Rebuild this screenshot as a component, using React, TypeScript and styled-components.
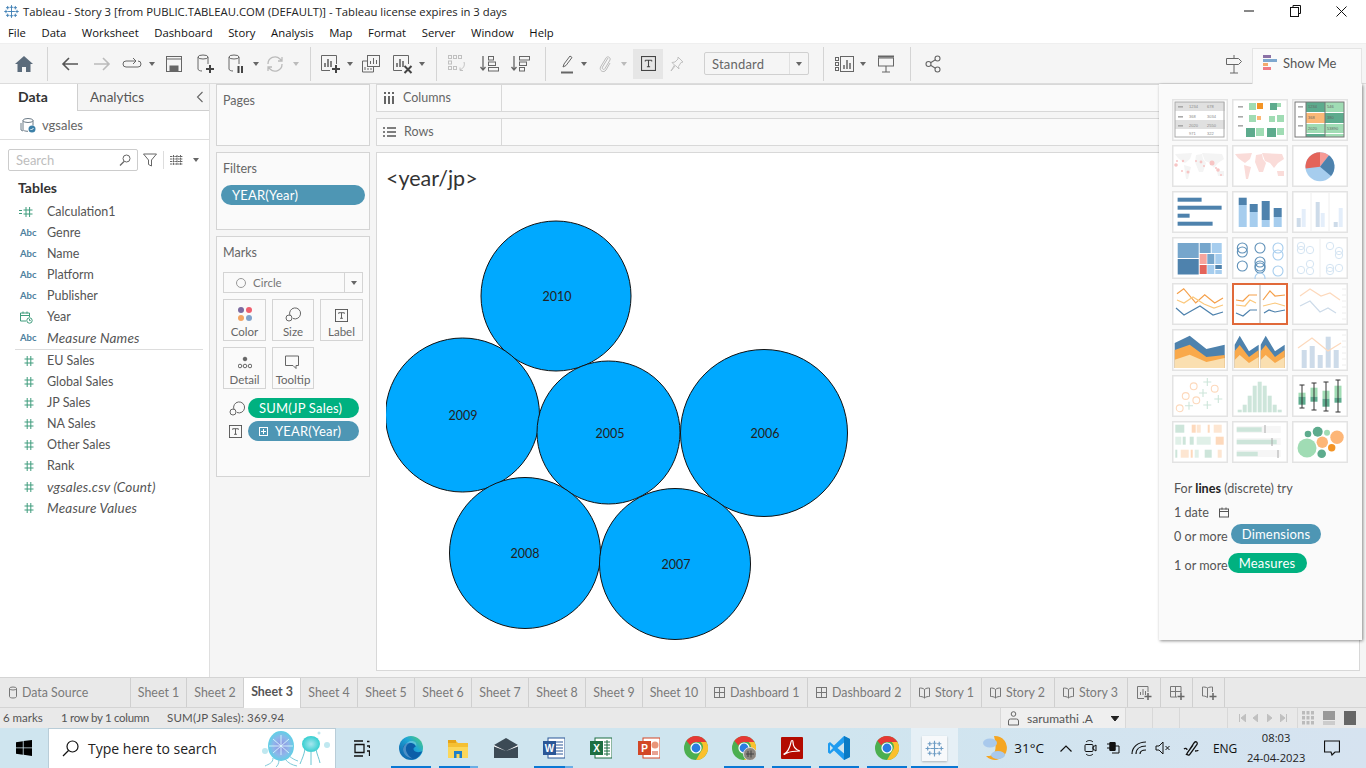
import React from 'react';
import styled, { createGlobalStyle } from 'styled-components';

const APP = '"Lato", "Open Sans", sans-serif';
const WIN = '"Open Sans", "Noto Sans", sans-serif';

const Global = createGlobalStyle`
  html, body { margin: 0; padding: 0; width: 1366px; height: 768px; overflow: hidden; background: #fff; }
  * { box-sizing: border-box; }
  svg { display: block; flex: none; }
`;

const Root = styled.div`
  width: 1366px; height: 768px; display: flex; flex-direction: column; font-family: ${APP}; color: #555; overflow: hidden;
`;
const TitleBar = styled.div`
  height: 22px; display: flex; align-items: center; padding-left: 3px; background: #fff;
`;
const TitleText = styled.span`
  font: 11.3px ${WIN}; color: #222; margin-left: 3px; white-space: nowrap;
`;
const WindowControls = styled.div`
  margin-left: auto; display: flex; align-items: center; height: 22px; padding-right: 2px;
`;
const WindowBtn = styled.div<{ $w: number }>`
  width: ${p => p.$w}px; display: flex; justify-content: center; align-items: center;
`;
const MenuBar = styled.div`
  height: 21px; display: flex; align-items: center; gap: 15.6px; padding-left: 8px; background: #fff;
`;
const MenuItem = styled.span`
  font: 11.3px ${WIN}; color: #111;
`;
const Toolbar = styled.div`
  height: 41px; display: flex; align-items: center; padding-left: 8px; background: #f5f5f5; border-bottom: 1px solid #dcdcdc; border-top: 1px solid #efefef; position: relative;
`;
const Tool = styled.div<{ $w: number; $active?: boolean }>`
  width: ${p => p.$w}px; height: 30px; display: flex; align-items: center; justify-content: center; background: ${p => (p.$active ? '#e6e6e6' : 'transparent')};
`;
const SignpostTool = styled(Tool)`
  margin-left: auto;
`;
const ToolDivider = styled.div<{ $w: number }>`
  width: ${p => p.$w}px; height: 34px; display: flex; justify-content: center;
  &::before { content: ''; width: 1px; background: #d4d4d4; }
`;
const Caret = styled.div<{ $light?: boolean }>`
  width: 0; height: 0; border-left: 3px solid transparent; border-right: 3px solid transparent; border-top: 4px solid ${p => (p.$light ? '#bbb' : '#666')};
`;
const SelectGap = styled.div`
  width: 13px;
`;
const StandardSelect = styled.div`
  width: 105px; height: 23px; border: 1px solid #d0d0d0; border-radius: 2px; background: #f5f5f5; display: flex; align-items: center; font-size: 13px; color: #666; padding-left: 7px; letter-spacing: .2px;
`;
const SelectArrow = styled.div`
  margin-left: auto; width: 19px; height: 21px; border-left: 1px solid #e0e0e0; display: flex; align-items: center; justify-content: center;
`;
const ShowMeTab = styled.div`
  margin-left: 1px; margin-right: 4px; width: 110px; height: 36px; align-self: flex-end; background: #fafafa; border: 1px solid #e4e4e4; border-bottom: none; display: flex; align-items: center; padding: 0 0 7px 10px; gap: 6px; font-size: 13px; color: #555; margin-bottom: -1px; position: relative; z-index: 3;
`;
const Workspace = styled.div`
  flex: 1; min-height: 0; display: flex; background: #f5f5f5; position: relative;
`;
const DataPane = styled.div`
  width: 210px; background: #fff; border-right: 1px solid #dfdfdf; display: flex; flex-direction: column;
`;
const PaneTabs = styled.div`
  height: 27px; display: flex;
`;
const DataTab = styled.div`
  width: 77px; font-weight: 700; font-size: 14px; color: #333; padding: 4px 0 0 18px;
`;
const AnalyticsTab = styled.div`
  flex: 1; background: #f5f5f5; border-left: 1px solid #cfcfcf; border-bottom: 1px solid #cfcfcf; display: flex; align-items: center; justify-content: space-between; padding: 0 5px 0 12px; font-size: 13.5px; color: #555;
`;
const SourceRow = styled.div`
  height: 29px; display: flex; align-items: center; gap: 6px; padding-left: 20px; font-size: 13px; color: #666; border-bottom: 1px solid #dedede;
`;
const SearchRow = styled.div`
  display: flex; align-items: center; padding: 9px 0 0 8px;
`;
const SearchBox = styled.div`
  width: 130px; height: 22px; border: 1px solid #ccc; border-radius: 2px; display: flex; align-items: center; justify-content: space-between; padding: 0 6px 0 7px; font-size: 13px; color: #bdbdbd;
`;
const FilterTool = styled.div`
  width: 17px; height: 20px; margin-left: 3px; display: flex; align-items: center; justify-content: center;
`;
const SearchDivider = styled.div`
  width: 1px; height: 18px; background: #ddd; margin: 0 6px 0 5px;
`;
const ListCaret = styled.div`
  width: 24px; height: 20px; margin-left: 1px; display: flex; align-items: center; justify-content: center;
`;
const TablesHeading = styled.div`
  font-weight: 700; font-size: 14px; color: #333; padding: 8px 0 0 18px; line-height: 18px; height: 30px;
`;
const FieldList = styled.div`
  display: flex; flex-direction: column;
`;
const FieldRow = styled.div<{ $italic?: boolean }>`
  height: 21px; display: flex; align-items: center; font-size: ${p => (p.$italic ? 13.5 : 12.5)}px; letter-spacing: ${p => (p.$italic ? 0.2 : 0)}px; color: #555; font-style: ${p => (p.$italic ? 'italic' : 'normal')};
`;
const FieldIcon = styled.div`
  width: 47px; padding-left: 19px; display: flex; align-items: center;
`;
const MeasureIcon = styled(FieldIcon)`
  padding-left: 24px;
`;
const AbcGlyph = styled.span`
  font-size: 9.5px; font-weight: 700; color: #4e7f9e; font-style: normal; margin-left: 1px; letter-spacing: 0;
`;
const FieldSep = styled.div`
  height: 1px; background: #ddd; margin: 1px 6px 0 15px;
`;
const SideColumn = styled.div`
  width: 154px; margin-left: 6px; display: flex; flex-direction: column;
`;
const Card = styled.div<{ $h: number; $mt?: number }>`
  height: ${p => p.$h}px; margin-top: ${p => p.$mt ?? 0}px; background: #fafafa; border: 1px solid #d4d4d4; padding: 8px 6px 0 6px;
`;
const CardTitle = styled.div`
  font-size: 12.5px; color: #666; line-height: 16px;
`;
const Pill = styled.div<{ $color: string; $w?: number; $pad?: number }>`
  height: 20px; border-radius: 10px; background: ${p => p.$color}; color: #fff; font-size: 13px; letter-spacing: .2px; display: flex; align-items: center; padding-left: ${p => p.$pad ?? 11}px; gap: 7px; width: ${p => (p.$w ? p.$w + 'px' : 'auto')}; flex: none;
`;
const FilterPill = styled(Pill)`
  margin: 8px 0 0 -2px;
`;
const MarkDropdown = styled.div`
  margin-top: 11px; height: 21px; border: 1px solid #d4d4d4; display: flex; align-items: center; background: #fafafa; font-size: 11.5px; color: #777;
`;
const CircleGlyph = styled.span`
  width: 10px; height: 10px; border-radius: 50%; border: 1px solid #999; margin: 0 7px 0 12px;
`;
const DropArrow = styled.div`
  margin-left: auto; width: 18px; height: 19px; border-left: 1px solid #d4d4d4; display: flex; align-items: center; justify-content: center;
`;
const MarkGrid = styled.div`
  display: grid; grid-template-columns: 43px 42px 43px; grid-auto-rows: 42px; column-gap: 6px; row-gap: 6px; margin-top: 6px;
`;
const MarkButton = styled.div`
  border: 1px solid #d4d4d4; display: flex; flex-direction: column; align-items: center; justify-content: flex-end; gap: 3px; padding-bottom: 1px; font-size: 11.5px; color: #666; line-height: 14px;
`;
const EncodingRow = styled.div<{ $mt: number }>`
  display: flex; align-items: center; margin-top: ${p => p.$mt}px;
`;
const EncodingIcon = styled.div`
  width: 25px; padding-left: 6px; display: flex;
`;
const CanvasColumn = styled.div`
  flex: 1; margin: 0 6px 6px 6px; display: flex; flex-direction: column; min-width: 0;
`;
const Shelf = styled.div<{ $mt?: number }>`
  height: 28px; margin-top: ${p => p.$mt ?? 0}px; background: #fafafa; border: 1px solid #d8d8d8; display: flex; flex: none;
`;
const ShelfLabel = styled.div`
  width: 125px; border-right: 1px solid #d8d8d8; display: flex; align-items: center; gap: 8px; padding: 0 0 1px 6px; font-size: 12.5px; color: #666;
`;
const ViewCard = styled.div`
  flex: 1; margin-top: 6px; background: #fff; border: 1px solid #d8d8d8; padding: 12px 0 0 9px;
`;
const ViewTitle = styled.div`
  font-size: 21.5px; color: #333; line-height: 26px; margin-bottom: 19px;
`;
const ShowMePanel = styled.div`
  position: absolute; left: 1159px; top: 0; width: 203px; height: 556px; background: #fafafa; box-shadow: 1px 1px 3px rgba(0,0,0,.45); padding: 15px 0 0 13px; z-index: 2;
`;
const ThumbGrid = styled.div`
  display: grid; grid-template-columns: repeat(3, 56px); grid-auto-rows: 42px; column-gap: 4px; row-gap: 4px;
`;
const Thumb = styled.div<{ $selected?: boolean }>`
  background: #fff; box-shadow: inset 0 0 0 ${p => (p.$selected ? '2px #e0693a' : '1.5px #e3e3e3')}; position: relative;
  & > svg { width: 56px; height: 42px; }
`;
const HintBlock = styled.div`
  margin-top: 15px; padding-left: 2px; font-size: 12.6px; color: #555; display: flex; flex-direction: column;
`;
const HintLine = styled.div<{ $h: number }>`
  height: ${p => p.$h}px; display: flex; align-items: center; white-space: pre;
  & b { color: #222; font-weight: 700; }
`;
const HintPill = styled(Pill)<{ $ml: number }>`
  margin: -4px 0 0 ${p => p.$ml}px;
`;
const TabBar = styled.div`
  height: 31px; display: flex; background: #e9e9e9; border-top: 1px solid #d4d4d4; border-bottom: 1px solid #d4d4d4; flex: none;
`;
const SheetTab = styled.div<{ $w: number; $active?: boolean; $left?: number }>`
  width: ${p => p.$w}px; border-right: 1px solid #cfcfcf; display: flex; align-items: center; justify-content: ${p => (p.$left ? 'flex-start' : 'center')}; padding-left: ${p => p.$left ?? 0}px; padding-bottom: ${p => (p.$active ? 3 : 0)}px; gap: 4px; font-size: 12.4px; font-weight: ${p => (p.$active ? 700 : 400)}; color: ${p => (p.$active ? '#555' : '#7a7a7a')}; background: ${p => (p.$active ? '#fff' : 'transparent')}; margin-bottom: ${p => (p.$active ? '-1px' : '0')}; white-space: nowrap;
`;
const StatusBar = styled.div`
  height: 20px; display: flex; align-items: center; background: #e9e9e9; font-size: 11.5px; color: #555; flex: none;
`;
const StatusLeft = styled.div`
  width: 1000px; display: flex; align-items: center; padding: 0 0 1px 3px;
`;
const StatusText = styled.span<{ $w: number; $ls?: number }>`
  width: ${p => p.$w}px; white-space: nowrap; letter-spacing: ${p => p.$ls ?? 0}px;
`;
const UserCell = styled.div`
  width: 126px; height: 20px; background: #efefef; border-left: 1px solid #d8d8d8; border-right: 1px solid #d8d8d8; display: flex; align-items: center; padding-left: 7px; gap: 8px; color: #555; font-size: 12px;
`;
const UserCaret = styled.span`
  margin-left: auto; margin-right: 6px; display: flex;
`;
const StatusCell = styled.div<{ $w: number }>`
  width: ${p => p.$w}px; height: 20px; border-right: 1px solid #d8d8d8; display: flex; align-items: center; justify-content: center; gap: 6px;
`;
const NavStep = styled.div`
  width: 8px; height: 8px; display: flex; align-items: center; justify-content: center;
`;
const ViewModes = styled.div`
  width: 62px; height: 20px; display: flex; align-items: center; justify-content: center; gap: 9px;
`;
const Taskbar = styled.div`
  height: 40px; display: flex; background: linear-gradient(90deg, #cfe5ef 0%, #cfe5ef 60%, #d6e3f0 100%); flex: none; font-family: ${WIN}; color: #111;
`;
const StartButton = styled.div`
  width: 48px; display: flex; align-items: center; justify-content: center;
`;
const TaskSearch = styled.div`
  width: 288px; background: #fff; border: 1px solid #b9cdd8; border-bottom: none; display: flex; align-items: center; padding-left: 13px; gap: 9px; font-size: 14px; color: #222; position: relative; overflow: hidden;
`;
const Jelly = styled.div`
  margin-left: auto; margin-right: 2px;
`;
const TaskViewBtn = styled.div`
  width: 51px; display: flex; align-items: center; justify-content: center;
`;
const TaskApp = styled.div<{ $running?: boolean; $multi?: boolean; $active?: boolean }>`
  width: 47.6px; height: 40px; flex: none; display: flex; align-items: center; justify-content: center; position: relative; background: ${p => (p.$active ? '#e6f0f6' : 'transparent')};
  &::after {
    content: ''; position: absolute; left: ${p => (p.$active ? 0 : 4)}px; right: ${p => (p.$active ? 0 : 4)}px; bottom: 0; height: 2px;
    background: ${p => (!p.$running ? 'transparent' : p.$multi ? 'linear-gradient(90deg,#0a78d4 0 80%,#6aaee6 80%)' : '#0a78d4')};
  }
`;
const LogoTile = styled.div`
  width: 25px; height: 25px; background: #f7f9fb; box-shadow: 0 1px 2px rgba(0,0,0,.25); display: flex; align-items: center; justify-content: center;
`;
const TraySlot = styled.div<{ $w: number; $ml?: number; $fs?: number }>`
  width: ${p => p.$w}px; margin-left: ${p => p.$ml ?? 0}px; display: flex; align-items: center; justify-content: center; font-size: ${p => p.$fs ?? 12}px; flex: none;
`;
const ClockText = styled.div`
  text-align: center; font-size: 11.2px; line-height: 20px; color: #222;
`;
const ChromeWrap = styled.div`
  position: relative;
`;

const S = (p: { w?: number; h?: number; vb?: string; children: React.ReactNode; c?: string; sw?: number }) => (
  <svg width={p.w ?? 20} height={p.h ?? 20} viewBox={p.vb ?? `0 0 ${p.w ?? 20} ${p.h ?? 20}`} fill="none" stroke={p.c ?? '#666'} strokeWidth={p.sw ?? 1}>{p.children}</svg>
);

const TableauLogo = ({ size, c }: { size: number; c: string }) => (
  <svg width={size} height={size} viewBox="0 0 20 20" fill="none" stroke={c} strokeWidth="1.1">
    <path d="M10 2.500v15M6 10h8M3.500 8v4M1.500 10h4M16.500 8v4M14.500 10h4M5.500 3.500v4M3.500 5.500h4M14.500 3.500v4M12.500 5.500h4M5.500 12.500v4M3.500 14.500h4M14.500 12.500v4M12.500 14.500h4" />
    <path d="M8 5h4M8 15h4" />
  </svg>
);
const BarsIcon = ({ plus, cross }: { plus?: boolean; cross?: boolean }) => (
  <S w={22} h={22}>
    <path d="M17.5 11V2.5h-15v15H11" />
    <path d="M6 14v-4M9 14V6M12 14V8" strokeWidth="1.6" />
    {plus && <path d="M17 12v8M13 16h8" strokeWidth="2" stroke="#444" />}
    {cross && <path d="M13.5 13l7 7M20.5 13l-7 7" strokeWidth="2" stroke="#444" />}
  </S>
);
const Cylinder = ({ pause }: { pause?: boolean }) => (
  <S w={22} h={22}>
    <ellipse cx="9" cy="4" rx="5" ry="2" />
    <path d="M4 4v12c0 1.2 2 2 4 2M14 4v7" />
    {!pause && <path d="M16 12v8M12 16h8" strokeWidth="2" stroke="#444" />}
    {pause && <path d="M13.5 13v7M17 13v7" strokeWidth="2" stroke="#444" />}
  </S>
);
const CaretTool = ({ w, light }: { w: number; light?: boolean }) => <Tool $w={w}><Caret $light={light} /></Tool>;

const HashIcon = () => (
  <S w={10} h={12} vb="0 0 10 12" c="#3f9c7c"><path d="M3.2 1v10M6.8 1v10M.5 4h9M.5 8h9" /></S>
);
const CalcHash = () => (
  <S w={14} h={12} vb="0 0 14 12" c="#3f9c7c"><path d="M0 4.5h3M0 7.5h3M7 1v10M10.6 1v10M4.5 4h9M4.5 8h9" /></S>
);
const DateIcon = () => (
  <S w={14} h={14} vb="0 0 14 14" c="#3f9c7c"><path d="M7 11H1.5V3h9v4M1.5 5.5h9M4 1.5v2M8 1.5v2" /><circle cx="10.5" cy="10.5" r="2.7" /><path d="M10.5 9v1.6h1.2" /></S>
);
const TIcon = ({ size = 14, c = '#555' }: { size?: number; c?: string }) => (
  <S w={size} h={size} vb="0 0 14 14" c={c}><rect x=".5" y=".5" width="13" height="13" /><path d="M4 4h6M7 4v6M5.5 10h3M4 4v1.2M10 4v1.2" /></S>
);
const SizeIcon = () => (
  <S w={16} h={16} vb="0 0 16 16" c="#666"><path d="M5 9.5a5.5 5.5 0 1 1 3 3" /><circle cx="4" cy="12" r="3" /></S>
);
const ChromeIcon = ({ badge }: { badge?: boolean }) => (
  <ChromeWrap>
    <svg width="24" height="24" viewBox="0 0 24 24">
      <circle cx="12" cy="12" r="12" fill="#4caf50" />
      <path d="M12 0A12 12 0 0 1 22.4 6H12a6 6 0 0 0-5.6 3.6L2.4 4.8A12 12 0 0 1 12 0z" fill="#e53935" />
      <path d="M22.4 6A12 12 0 0 1 12 24l5.2-9a6 6 0 0 0-.5-9z" fill="#fbc02d" />
      <circle cx="12" cy="12" r="5.6" fill="#fff" />
      <circle cx="12" cy="12" r="4.4" fill="#2a7de1" />
      {badge && <circle cx="18" cy="18" r="6.5" fill="#8b8680" stroke="#ddd" />}
      {badge && <path d="M14 18h8M16 15v6M19 14.5v7" stroke="#444" strokeWidth="1" />}
    </svg>
  </ChromeWrap>
);

const Line = ({ pts, c, w = 1.2 }: { pts: string; c: string; w?: number }) => <polyline points={pts} fill="none" stroke={c} strokeWidth={w} />;
const R = ({ x, y, w, h, c }: { x: number; y: number; w: number; h: number; c: string }) => <rect x={x} y={y} width={w} height={h} fill={c} />;
const G1 = '#a0dcb4', G2 = '#5dab8d', O1 = '#fbb877', B1 = '#4e82ad', B2 = '#a6cdee', B3 = '#76a6cc', P1 = '#cddbe9', P2 = '#e4eefa', PG = '#cde5da', PG2 = '#e0f0e8', PO = '#fdd9bc', PO2 = '#fde6d2';
const TX = ({ x, y, t, c = '#888' }: { x: number; y: number; t: string; c?: string }) => <text x={x} y={y} fontSize="4" fontFamily="Liberation Sans, sans-serif" fill={c}>{t}</text>;
const Dash = ({ y }: { y: number }) => <rect x="6" y={y} width="5" height="1.6" fill="#aaa" />;
const world = 'M3 9L20 8L18 14L13 18L10 16L6 13ZM12 20L19 22L16 34L14 34ZM24 10L30 9L31 14L34 18L31 27L27 27L23 17ZM30 8L50 9L52 14L46 18L42 23L38 18L33 16ZM45 26L52 26L52 31L46 31Z';
const Ticks = () => <path d="M50 6h4M50 12h4M50 18h4M50 24h4M50 30h4M50 36h4" stroke="#eee" strokeWidth="1" />;

const thumbs: React.ReactNode[] = [
  <><R x={3} y={3} w={50} h={9} c="#e0e0e0" /><R x={3} y={21} w={50} h={9} c="#e0e0e0" /><rect x="3" y="3" width="49" height="35" fill="none" stroke="#aaa" /><Dash y={7} /><Dash y={17} /><Dash y={26} /><TX x={17} y={9} t="1234" /><TX x={35} y={9} t="678" /><TX x={17} y={19} t="368" /><TX x={35} y={19} t="3034" /><TX x={17} y={28} t="2020" /><TX x={35} y={28} t="2550" /><TX x={17} y={36} t="971" /><TX x={35} y={36} t="322" /></>,
  <><Dash y={7} /><Dash y={17} /><Dash y={26} /><R x={17} y={4} w={7} h={7} c={G1} /><R x={25} y={4} w={6} h={6} c="#f39426" /><R x={38} y={4} w={7} h={7} c={G2} /><R x={45} y={4} w={4} h={4} c={G1} /><R x={17} y={16} w={7} h={7} c={G1} /><R x={25} y={17} w={4} h={4} c={O1} /><R x={37} y={17} w={6} h={6} c={G1} /><R x={45} y={16} w={7} h={7} c={G1} /><R x={14} y={29} w={9} h={9} c={G2} /><R x={24} y={29} w={8} h={8} c={G1} /><R x={35} y={29} w={9} h={9} c={G2} /><R x={45} y={29} w={7} h={7} c={G1} /></>,
  <><R x={14} y={3} w={19} h={10} c={G2} /><R x={33} y={3} w={19} h={10} c={G1} /><R x={14} y={14} w={19} h={10} c={O1} /><R x={33} y={14} w={19} h={10} c={G2} /><R x={14} y={25} w={19} h={9} c={G1} /><R x={33} y={25} w={19} h={9} c={G1} /><R x={14} y={35} w={19} h={3} c={G2} /><R x={33} y={35} w={19} h={3} c={G1} /><rect x="3" y="3" width="49" height="35" fill="none" stroke="#777" /><path d="M14 3v35M33 3v35" stroke="#777" /><Dash y={7} /><Dash y={17} /><Dash y={26} /><TX x={16} y={9} t="1234" c="#666" /><TX x={35} y={9} t="546" c="#666" /><TX x={16} y={20} t="368" c="#666" /><TX x={35} y={20} t="380" c="#666" /><TX x={16} y={31} t="2020" c="#666" /><TX x={35} y={31} t="53890" c="#666" /></>,
  <><path d={world} fill="#f4f4f4" /><g fill="#f7c5c4"><circle cx="4" cy="20" r="1.8" /><circle cx="5" cy="16" r="1" /><circle cx="11" cy="16" r="1.2" /><circle cx="10" cy="26" r="1" /><circle cx="16" cy="27" r="1.5" /><circle cx="24" cy="16" r="1" /><circle cx="29" cy="17" r="1.4" /><circle cx="32" cy="21" r="1" /><circle cx="40" cy="18" r="2.5" /><circle cx="44" cy="23" r="1" /><circle cx="46" cy="25" r="1.8" /><circle cx="49" cy="30" r="1" /></g></>,
  <path d={world} fill="#fadcd9" />,
  <><circle cx="28" cy="21.7" r="14.5" fill={B2} /><path d="M28 21.7L28 7.2A14.5 14.5 0 0 1 37 10.3Z" fill="#f79a95" /><path d="M28 21.7L37 10.3A14.5 14.5 0 0 1 39 31Z" fill={B1} /><path d="M28 21.7L13.6 23.5A14.5 14.5 0 0 1 28 7.2Z" fill="#e4645a" /></>,
  <><R x={5.6} y={6.7} w={24} h={4} c={B1} /><R x={5.6} y={14.7} w={44} h={4} c={B1} /><R x={5.6} y={22.7} w={12} h={4} c={B1} /><R x={5.6} y={30.7} w={35} h={4} c={B1} /></>,
  <><R x={6.7} y={6.7} w={8} h={7.3} c={B1} /><R x={6.7} y={14} w={8} h={22} c={B2} /><R x={17.7} y={13} w={8} h={8} c={B1} /><R x={17.7} y={21} w={8} h={15} c={B2} /><R x={29.7} y={10} w={8} h={19} c={B1} /><R x={29.7} y={29} w={8} h={7} c={B2} /><R x={41.7} y={17} w={8} h={9} c={B1} /><R x={41.7} y={26} w={8} h={10} c={B2} /></>,
  <><path d="M19 2v38M37 2v38" stroke="#eee" /><R x={4.7} y={27} w={4} h={9} c={P1} /><R x={9.7} y={18} w={4} h={18} c={P2} /><R x={23.7} y={11} w={4} h={25} c={P1} /><R x={28.7} y={22} w={4} h={14} c={P2} /><R x={41.7} y={31} w={4} h={5} c={P1} /><R x={46.7} y={17} w={4} h={19} c={P2} /></>,
  <><R x={5.7} y={6} w={21} h={15} c={B3} /><R x={5.7} y={22} w={21} h={15.5} c={B1} /><R x={27.7} y={6} w={11} h={10} c={B3} /><R x={39.7} y={6} w={10} h={10} c={B2} /><R x={27.7} y={17} w={7} h={10} c="#f7a59d" /><R x={27.7} y={28} w={7} h={9} c="#e4645a" /><R x={35.3} y={17} w={7} h={10} c={B3} /><R x={35.3} y={28} w={7} h={9} c={B2} /><R x={43.3} y={17} w={6.5} h={10} c={B2} /><R x={43.3} y={28} w={6.5} h={4} c={B1} /><R x={43.3} y={33} w={6.5} h={4} c={B2} /></>,
  <g fill="none" strokeWidth="1.1"><g stroke="#5e90b8">{[[10.3, 11], [10.3, 15], [10.3, 29], [28, 11], [28, 25], [28, 29], [28, 31]].map(([x, y], i) => <circle key={i} cx={x} cy={y} r="5" />)}</g><g stroke="#a6cdee">{[[46, 11], [46, 18], [46, 34], [28, 41]].map(([x, y], i) => <circle key={i} cx={x} cy={y} r="5" />)}</g></g>,
  <><path d="M28 2v38" stroke="#eee" /><g fill="none" strokeWidth="1" stroke="#d5e5f3">{[[9, 9], [9, 13], [18, 13], [9, 33], [18, 34], [18, 27], [38, 9], [47, 14], [47, 18], [38, 31], [38, 34], [47, 31]].map(([x, y], i) => <circle key={i} cx={x} cy={y} r="3.7" />)}</g></>,
  <><Line pts="5,10.7 11.7,5.7 23.7,20 32.7,11.7 42.7,20 51,15" c="#f5a04a" /><Line pts="5,17 12,20 21,14 32,21 42,25 51,22" c="#fbc87c" /><Line pts="4,25 12,32 28,23 41,32 51,29" c={B1} /></>,
  <><path d="M28 2v38" stroke="#aaa" /><Line pts="4,17 11,18 17,12 25,12" c="#f5a04a" /><Line pts="4,22 13,23 18,17 24,20" c="#fbc87c" /><Line pts="4,30 11,33 18,27 25,27" c={B1} /><Line pts="31,17 38,8 43,13 53,12" c="#f5a04a" /><Line pts="31,23 43,20 53,23" c="#fbc87c" /><Line pts="32,30 37,27 43,29 53,27" c={B1} /></>,
  <><Ticks /><Line pts="8,13 18,6 29,13 38,10 48,17" c={PO} /><Line pts="8,23 18,18 28,29 36,25 44,30" c={P1} /></>,
  <><path d="M2.7 14L17.7 6.7L34.4 20L52.7 15.7V39H2.7Z" fill={B1} /><path d="M2.7 21L17.7 15.7L34.4 28L52.7 26V39H2.7Z" fill="#f9a94b" /><path d="M2.7 30.7L17.7 25.7L34.4 33L52.7 29V39H2.7Z" fill="#fadfb0" /></>,
  <>{[0, 26].map(d => <g key={d} transform={`translate(${d} 0)`}><path d="M2.7 15.7L7.7 6.7L17 22.3L26.7 15.7V39H2.7Z" fill={B1} /><path d="M2.7 22L7.7 16L17 28L26.7 21V39H2.7Z" fill="#f9a94b" /><path d="M2.7 31L7.7 26L17 34L26.7 28V39H2.7Z" fill="#fadfb0" /></g>)}</>,
  <><Ticks /><R x={9.7} y={21} w={5} h={18} c={P1} /><R x={17.7} y={17} w={5} h={22} c={P1} /><R x={25.7} y={26} w={5} h={13} c={P1} /><R x={33.7} y={7.7} w={5} h={31} c={P1} /><R x={41.7} y={21} w={5} h={18} c={P1} /><Line pts="6,19 20,9 36,22 49,14" c={PO} /></>,
  <><g fill="none" stroke={PO} strokeWidth="1.1">{[[7.7, 33.3], [13.7, 21], [21.7, 11.3], [24.3, 25.3], [42.7, 13.7]].map(([x, y], i) => <circle key={i} cx={x} cy={y} r="3.4" />)}</g><g stroke={PG} strokeWidth="1.1">{[[17, 30.7], [31, 18], [35.3, 7], [35.3, 30], [46.3, 24]].map(([x, y], i) => <path key={i} d={`M${x - 4} ${y}h8M${x} ${y - 4}v8`} />)}</g></>,
  <>{[34.7, 29.7, 20.7, 10.7, 6.7, 10.7, 20.7, 29.7, 34.7].map((y, i) => <R key={i} x={5.7 + i * 5} y={y} w={4} h={37.3 - y} c={PG} />)}</>,
  <>{[[10, 10, 33, 17.7, 21.7, 29.7], [22, 8, 35, 12.7, 21.7, 26.7], [34, 7, 36, 15.7, 23.7, 31.7], [46, 5, 37, 10.7, 22.7, 27.7]].map(([x, a, b, c, d, e], i) => <g key={i}><R x={x - 3.5} y={c} w={7} h={d - c} c={G1} /><R x={x - 3.5} y={d} w={7} h={e - d} c={G2} /><path d={`M${x} ${a}V${b}M${x - 2.5} ${a}h5M${x - 2.5} ${b}h5`} stroke="#333" /></g>)}</>,
  <><R x={3.3} y={3.7} w={9} h={8} c={PG} /><R x={19.7} y={3.7} w={4} h={8} c={PO} /><R x={24.7} y={3.7} w={4} h={8} c={PO2} /><R x={35.7} y={3.7} w={2} h={8} c={PO} /><R x={41.7} y={3.7} w={8} h={8} c={PO2} /><R x={3.3} y={15.7} w={6} h={8} c={PG2} /><R x={10.7} y={15.7} w={3} h={8} c={PG} /><R x={17.7} y={15.7} w={4} h={8} c={PG} /><R x={24.7} y={15.7} w={14} h={8} c={PG2} /><R x={43.7} y={15.7} w={8} h={8} c={PO} /><R x={3.3} y={28.7} w={2} h={8} c={PG} /><R x={8.7} y={28.7} w={8} h={8} c={PO2} /><R x={18.7} y={28.7} w={2} h={8} c={PO} /><R x={22.7} y={28.7} w={4} h={8} c={PG2} /><R x={32.7} y={28.7} w={7} h={8} c={PG} /><R x={45.7} y={28.7} w={4} h={8} c={PO2} /></>,
  <><R x={4.7} y={5} w={44} h={7} c="#f6f6f6" /><R x={4.7} y={17} w={44} h={7} c="#f6f6f6" /><R x={4.7} y={29} w={44} h={7} c="#f6f6f6" /><R x={4.7} y={6.3} w={25} h={4.5} c={PG} /><R x={4.7} y={18.7} w={40} h={4.5} c={PG} /><R x={4.7} y={30.7} w={21} h={4.5} c={PG} /><path d="M33 4v8M40 17v8M46 29v8" stroke="#aaa" strokeWidth="1" /></>,
  <>{([[15, 27, 9.5, G1], [16, 13, 3.3, G2], [25.7, 10.7, 5, G2], [35, 11.7, 3, G1], [45, 16.3, 6.7, '#fdb677'], [30.3, 21.3, 5.7, '#fdb677'], [39.7, 26.7, 3.7, '#f39426'], [29.7, 32.7, 4.3, G2]] as [number, number, number, string][]).map(([x, y, r, c], i) => <circle key={i} cx={x} cy={y} r={r} fill={c} />)}</>,
];

const fields: { k: 'calc' | 'abc' | 'date'; t: string; i?: boolean }[] = [
  { k: 'calc', t: 'Calculation1' }, { k: 'abc', t: 'Genre' }, { k: 'abc', t: 'Name' }, { k: 'abc', t: 'Platform' }, { k: 'abc', t: 'Publisher' }, { k: 'date', t: 'Year' }, { k: 'abc', t: 'Measure Names', i: true },
];
const measures = [
  { t: 'EU Sales' }, { t: 'Global Sales' }, { t: 'JP Sales' }, { t: 'NA Sales' }, { t: 'Other Sales' }, { t: 'Rank' }, { t: 'vgsales.csv (Count)', i: true }, { t: 'Measure Values', i: true },
];
const circles: [number, number, number, string, number, number][] = [
  [556, 296, 75, '2010', 557, 301], [462.5, 415, 77, '2009', 463, 420], [608.5, 432.5, 71.5, '2005', 610, 438], [764, 433, 83.5, '2006', 765, 438], [525, 553, 75.5, '2008', 525, 558], [675, 564, 75.5, '2007', 676, 569],
];
const sheetTabs: [string, number][] = [['Sheet 1', 56], ['Sheet 2', 57], ['Sheet 3', 57], ['Sheet 4', 57], ['Sheet 5', 57], ['Sheet 6', 57], ['Sheet 7', 57], ['Sheet 8', 57], ['Sheet 9', 57], ['Sheet 10', 63]];

const DashIcon = () => <S w={13} h={13} c="#777"><rect x="1.5" y="1.5" width="10" height="10" /><path d="M6.5 1.5v10M1.5 6.5h10" /></S>;
const StoryIcon = () => <S w={13} h={13} c="#777"><path d="M6.5 3.5C5 2 3 2 1.5 2v8.5c1.5 0 3.5 0 5 1.5 1.5-1.5 3.5-1.5 5-1.5V2C10 2 8 2 6.5 3.5zM6.5 3.5V12" /></S>;

export default function App() {
  return (
    <Root>
      <Global />
      <TitleBar>
        <TableauLogo size={17} c="#3f7fb5" />
        <TitleText>Tableau - Story 3 [from PUBLIC.TABLEAU.COM (DEFAULT)] - Tableau license expires in 3 days</TitleText>
        <WindowControls>
          <WindowBtn $w={46}><S w={10} h={2} c="#111"><path d="M0 1h10" /></S></WindowBtn>
          <WindowBtn $w={46}><S w={11} h={12} c="#111"><path d="M3 2.5V.5h7.5v8H8.5" /><rect x=".5" y="2.5" width="8" height="9" /></S></WindowBtn>
          <WindowBtn $w={46}><S w={11} h={11} c="#111"><path d="M.5.5l10 10M10.5.5l-10 10" /></S></WindowBtn>
        </WindowControls>
      </TitleBar>
      <MenuBar>
        {['File', 'Data', 'Worksheet', 'Dashboard', 'Story', 'Analysis', 'Map', 'Format', 'Server', 'Window', 'Help'].map(m => <MenuItem key={m}>{m}</MenuItem>)}
      </MenuBar>
      <Toolbar>
        <Tool $w={32}><svg width="18" height="16" viewBox="0 0 18 16" fill="#5b6b7b"><path d="M9 0L0 8h2.5v8H7v-5h4v5h4.500V8H18z" /></svg></Tool>
        <ToolDivider $w={15} />
        <Tool $w={30}><S w={18} h={14} c="#555" sw={1.6}><path d="M17 7H2M8 1L2 7l6 6" /></S></Tool>
        <Tool $w={34}><S w={18} h={14} c="#bbb" sw={1.6}><path d="M1 7h15M10 1l6 6-6 6" /></S></Tool>
        <Tool $w={26}><S w={20} h={12} c="#666"><path d="M14 3H4a3 3 0 0 0 0 6h12a3 3 0 0 0 0-6" /><path d="M11 0l3 3-3 3" /></S></Tool>
        <CaretTool w={14} />
        <Tool $w={30}><S w={16} h={16} c="#666"><rect x=".5" y=".5" width="15" height="15" /><path d="M.5 3h15" /><rect x="4" y="10" width="8" height="5.5" fill="#666" /></S></Tool>
        <Tool $w={32}><Cylinder /></Tool>
        <Tool $w={30}><Cylinder pause /></Tool>
        <CaretTool w={10} />
        <Tool $w={28}><S w={18} h={18} c="#bbb" sw={1.3}><path d="M2 9a7 7 0 0 1 12-5l2 2M16 9a7 7 0 0 1-12 5l-2-2M16 2v4h-4M2 16v-4h4" /></S></Tool>
        <CaretTool w={14} light />
        <ToolDivider $w={14} />
        <Tool $w={26}><BarsIcon plus /></Tool>
        <CaretTool w={14} />
        <Tool $w={28}><S w={18} h={18} c="#666"><rect x="5.5" y=".5" width="12" height="11" /><path d="M8.5 9V6M11.5 9V3M14.5 9V5" /><path d="M5.5 6H.5v11h11v-5.5M3 15v-3M6 15v-2M9 15v-2" /></S></Tool>
        <Tool $w={34}><BarsIcon cross /></Tool>
        <CaretTool w={6} />
        <ToolDivider $w={22} />
        <Tool $w={20}><S w={18} h={18} c="#c0c0c0"><rect x=".5" y=".5" width="3" height="3" /><rect x="5.5" y=".5" width="3" height="3" /><rect x="10.5" y=".5" width="3" height="3" /><rect x=".5" y="6" width="3" height="3" /><rect x=".5" y="11.5" width="3" height="3" /><rect x="5.5" y="11.5" width="3" height="3" /><path d="M16 7c1 3 0 6-4 8M12 12.5v3h3" /></S></Tool>
        <Tool $w={46}><S w={20} h={18} c="#666"><path d="M3 1v14M.5 12L3 15l2.5-3" strokeWidth="1.3" /><rect x="8.5" y="1.5" width="5" height="3.5" /><rect x="8.5" y="7" width="7" height="3.5" /><rect x="8.5" y="12.5" width="10" height="3.5" /></S></Tool>
        <Tool $w={16}><S w={20} h={18} c="#666"><path d="M3 1v14M.5 12L3 15l2.5-3" strokeWidth="1.3" /><rect x="8.5" y="1.5" width="10" height="3.5" /><rect x="8.5" y="7" width="7" height="3.5" /><rect x="8.5" y="12.5" width="5" height="3.5" /></S></Tool>
        <ToolDivider $w={32} />
        <Tool $w={12}><S w={14} h={20} c="#666"><path d="M3 13l1-3 6-8 2 1.5-6 8z" /><path d="M1 18.5h12" strokeWidth="2" /></S></Tool>
        <CaretTool w={22} />
        <Tool $w={20}><S w={14} h={20} c="#bbb"><path d="M10 4L4.500 13c-1 2 1.500 3.500 2.500 1.500L12 6c1-2.500-2.500-4.500-4-2L2.500 13c-1.500 3.500 3 6.500 5.500 3l4-7" /></S></Tool>
        <CaretTool w={18} light />
        <Tool $w={30} $active><TIcon size={15} c="#444" /></Tool>
        <Tool $w={28}><S w={14} h={16} c="#c0c0c0"><path d="M8 1l5 5-2 .5-2.500 4L9 13 5.500 9.500 1 15l3.500-6L2 6.500l3-.5 3-3z" /></S></Tool>
        <SelectGap />
        <StandardSelect>Standard<SelectArrow><Caret /></SelectArrow></StandardSelect>
        <ToolDivider $w={28} />
        <Tool $w={16}><S w={20} h={16} c="#666"><rect x=".5" y="1.5" width="3" height="3" /><rect x=".5" y="6.5" width="3" height="3" /><rect x=".5" y="11.5" width="3" height="3" /><rect x="5.5" y=".5" width="13" height="15" /><path d="M9 13V9M12 13V4M15 13V7" strokeWidth="1.5" /></S></Tool>
        <CaretTool w={20} />
        <Tool $w={26}><S w={18} h={18} c="#666"><rect x="1.5" y="3" width="15" height="8" /><path d="M9 11v6M5 17h8" strokeWidth="1.1" /><path d="M1 1.5h16" strokeWidth="2" /></S></Tool>
        <ToolDivider $w={22} />
        <Tool $w={24}><S w={16} h={18} c="#666" sw={1.1}><circle cx="3.5" cy="9" r="2.5" /><circle cx="12.5" cy="3.5" r="2.5" /><circle cx="12.5" cy="14.5" r="2.5" /><path d="M5.600 7.800l4.800-3M5.600 10.200l4.800 3" /></S></Tool>
        <SignpostTool $w={34}><S w={18} h={20} c="#666"><path d="M9 1v3M9 11v8M5 19h8" /><path d="M1.5 4.5h12l3 3-3 3h-12z" /></S></SignpostTool>
        <ShowMeTab>
          <svg width="14" height="16" viewBox="0 0 14 16"><rect y="0" width="8" height="3" fill="#8c72a6" /><rect y="4" width="14" height="3" fill="#7fa8cf" /><rect y="8" width="5" height="3" fill="#f3a96c" /><rect y="12" width="8" height="3" fill="#ef7b85" /></svg>
          Show Me
        </ShowMeTab>
      </Toolbar>
      <Workspace>
        <DataPane>
          <PaneTabs>
            <DataTab>Data</DataTab>
            <AnalyticsTab>Analytics<S w={8} h={12} c="#666" sw={1.1}><path d="M6.500 1L1.500 6l5 5" /></S></AnalyticsTab>
          </PaneTabs>
          <SourceRow>
            <S w={16} h={16} c="#6b7a86"><ellipse cx="8" cy="3.5" rx="5" ry="2" /><path d="M3 3.500v9c0 1 2 1.800 5 1.800M13 3.500v5M1 6v7l2 1" /><circle cx="12" cy="12" r="3.5" fill="#3c80a8" stroke="none" /><path d="M10.500 12l1 1 2-2" stroke="#fff" /></S>
            vgsales
          </SourceRow>
          <SearchRow>
            <SearchBox>Search<S w={12} h={12} c="#666"><circle cx="7.5" cy="4.5" r="3.5" /><path d="M5 7.500l-4 4" strokeWidth="1.2" /></S></SearchBox>
            <FilterTool><S w={14} h={14} c="#666"><path d="M.5 1h13L8.500 7v6l-3-1.500V7z" /></S></FilterTool>
            <SearchDivider />
            <S w={13} h={10} c="#666"><path d="M0 1.500h13M0 4h13M0 6.500h13M0 9h13M3.500 0v10M7 0v10M10.500 0v10" strokeDasharray="2 .6" /></S>
            <ListCaret><Caret /></ListCaret>
          </SearchRow>
          <TablesHeading>Tables</TablesHeading>
          <FieldList>
            {fields.map(f => (
              <FieldRow key={f.t} $italic={f.i}>
                <FieldIcon>{f.k === 'calc' ? <CalcHash /> : f.k === 'abc' ? <AbcGlyph>Abc</AbcGlyph> : <DateIcon />}</FieldIcon>
                {f.t}
              </FieldRow>
            ))}
            <FieldSep />
            {measures.map(f => (
              <FieldRow key={f.t} $italic={f.i}>
                <MeasureIcon><HashIcon /></MeasureIcon>
                {f.t}
              </FieldRow>
            ))}
          </FieldList>
        </DataPane>
        <SideColumn>
          <Card $h={62}><CardTitle>Pages</CardTitle></Card>
          <Card $h={78} $mt={6}>
            <CardTitle>Filters</CardTitle>
            <FilterPill $color="#4e96b4" $w={144}>YEAR(Year)</FilterPill>
          </Card>
          <Card $h={241} $mt={6}>
            <CardTitle>Marks</CardTitle>
            <MarkDropdown><CircleGlyph />Circle<DropArrow><Caret /></DropArrow></MarkDropdown>
            <MarkGrid>
              <MarkButton>
                <svg width="16" height="16" viewBox="0 0 16 16"><circle cx="4" cy="4" r="3" fill="#7c6aa0" /><circle cx="12" cy="4" r="3" fill="#ef5f6e" /><circle cx="4" cy="12" r="3" fill="#f3a462" /><circle cx="12" cy="12" r="3" fill="#7fa2cc" /></svg>
                Color
              </MarkButton>
              <MarkButton><SizeIcon />Size</MarkButton>
              <MarkButton><TIcon size={13} />Label</MarkButton>
              <MarkButton>
                <S w={14} h={14} c="#666"><circle cx="7" cy="3" r="1.8" fill="#666" /><circle cx="2" cy="10" r="1.8" /><circle cx="7" cy="10" r="1.8" /><circle cx="12" cy="10" r="1.8" /></S>
                Detail
              </MarkButton>
              <MarkButton><S w={16} h={15} c="#666"><path d="M.5 1h13v9.500h-2.500v3l-3-3H.5z" /></S>Tooltip</MarkButton>
            </MarkGrid>
            <EncodingRow $mt={9}>
              <EncodingIcon><SizeIcon /></EncodingIcon>
              <Pill $color="#00b180" $w={111}>SUM(JP Sales)</Pill>
            </EncodingRow>
            <EncodingRow $mt={3}>
              <EncodingIcon><TIcon size={13} /></EncodingIcon>
              <Pill $color="#4e96b4" $w={111}><S w={9} h={9} c="#fff" vb="0 0 9 9"><rect x=".5" y=".5" width="8" height="8" /><path d="M4.500 2v5M2 4.500h5" /></S>YEAR(Year)</Pill>
            </EncodingRow>
          </Card>
        </SideColumn>
        <CanvasColumn>
          <Shelf><ShelfLabel><S w={12} h={12} c="#555" sw={1.8}><path d="M2 4v8M6 4v8M10 4v8M2 0v2M6 0v2M10 0v2" /></S>Columns</ShelfLabel></Shelf>
          <Shelf $mt={6}><ShelfLabel><S w={13} h={10} c="#555" sw={1.4}><path d="M0 1h2M4 1h9M0 5h2M4 5h9M0 9h2M4 9h9" /></S>Rows</ShelfLabel></Shelf>
          <ViewCard>
            <ViewTitle>&lt;year/jp&gt;</ViewTitle>
            <svg width="470" height="435" viewBox="386 210 470 435">
              {circles.map(([x, y, r, t, tx, ty]) => (
                <g key={t}>
                  <circle cx={x} cy={y} r={r} fill="#00a9ff" stroke="#111" strokeWidth="1" />
                  <text x={tx} y={ty} textAnchor="middle" fontSize="12.5" fontFamily="Lato, sans-serif" fill="#222">{t}</text>
                </g>
              ))}
            </svg>
          </ViewCard>
        </CanvasColumn>
        <ShowMePanel>
          <ThumbGrid>
            {thumbs.map((t, i) => <Thumb key={i} $selected={i === 13}><svg viewBox="0 0 56 42">{t}</svg></Thumb>)}
          </ThumbGrid>
          <HintBlock>
            <HintLine $h={20}>For <b>lines</b> (discrete) try</HintLine>
            <HintLine $h={28}>1 date   <S w={10} h={11} c="#555"><rect x=".5" y="2" width="9" height="8" /><path d="M.5 4.500h9M3 .5v2M7 .5v2" /></S></HintLine>
            <HintLine $h={20}>0 or more<HintPill $ml={3} $pad={11} $color="#4e96b4" $w={90}>Dimensions</HintPill></HintLine>
            <HintLine $h={38}>1 or more<HintPill $ml={0} $pad={11} $color="#00b180" $w={79}>Measures</HintPill></HintLine>
          </HintBlock>
        </ShowMePanel>
      </Workspace>
      <TabBar>
        <SheetTab $w={131} $left={8}>
          <S w={10} h={13} c="#777"><ellipse cx="5" cy="2.5" rx="3.5" ry="1.5" /><path d="M1.500 2.500v8c0 2 7 2 7 0v-8" /></S>
          Data Source
        </SheetTab>
        {sheetTabs.map(([t, w]) => <SheetTab key={t} $w={w} $active={t === 'Sheet 3'}>{t}</SheetTab>)}
        <SheetTab $w={102} $left={7}><DashIcon />Dashboard 1</SheetTab>
        <SheetTab $w={103} $left={7}><DashIcon />Dashboard 2</SheetTab>
        <SheetTab $w={71} $left={7}><StoryIcon />Story 1</SheetTab>
        <SheetTab $w={73} $left={7}><StoryIcon />Story 2</SheetTab>
        <SheetTab $w={73} $left={7}><StoryIcon />Story 3</SheetTab>
        <SheetTab $w={33}><S w={16} h={16} c="#777"><path d="M12 7V1.500H1.500v12H8M4.500 10V7M7 10V4M9.500 10V6" /><path d="M12 8v7M8.500 11.500h7" stroke="#666" strokeWidth="1.5" /></S></SheetTab>
        <SheetTab $w={32}><S w={16} h={16} c="#777"><path d="M8 12H1.500V1.500H12V8M6.500 1.500V12M1.500 6.500H12" /><path d="M12 8v7M8.500 11.500h7" stroke="#666" strokeWidth="1.5" /></S></SheetTab>
        <SheetTab $w={32}><S w={16} h={16} c="#777"><path d="M6.500 3C5 2 3 2 1.500 2v9c1.500 0 3 0 5 1.500M6.500 3C8 2 10 2 11.500 2v5M6.500 3v9.500" /><path d="M12 8v7M8.500 11.500h7" stroke="#666" strokeWidth="1.5" /></S></SheetTab>
      </TabBar>
      <StatusBar>
        <StatusLeft>
          <StatusText $w={58}>6 marks</StatusText>
          <StatusText $w={106} $ls={-0.3}>1 row by 1 column</StatusText>
          <StatusText $w={200} $ls={0.2}>SUM(JP Sales): 369.94</StatusText>
        </StatusLeft>
        <UserCell>
          <S w={11} h={15} c="#666"><circle cx="5.5" cy="3" r="2.3" /><path d="M.5 14V10a2 2 0 0 1 2-2h6a2 2 0 0 1 2 2v4z" /></S>
          sarumathi .A
          <UserCaret><S w={8} h={5} c="#222"><path d="M0 0h8L4 5z" fill="#222" /></S></UserCaret>
        </UserCell>
        <StatusCell $w={27} />
        <StatusCell $w={27} />
        <StatusCell $w={48} />
        <StatusCell $w={70}>
          <S w={7} h={8} c="#c0c0c0"><path d="M.5 0v8M7 0L2 4l5 4z" fill="#c0c0c0" /></S>
          <NavStep><S w={5} h={8} c="#c0c0c0"><path d="M5 0L0 4l5 4z" fill="#c0c0c0" /></S></NavStep>
          <NavStep><S w={5} h={8} c="#c0c0c0"><path d="M0 0l5 4-5 4z" fill="#c0c0c0" /></S></NavStep>
          <S w={7} h={8} c="#c0c0c0"><path d="M6.500 0v8M0 0l5 4-5 4z" fill="#c0c0c0" /></S>
        </StatusCell>
        <ViewModes>
          <svg width="12" height="14" viewBox="0 0 12 14" fill="#bbb">{[0, 5, 10].map(y => [0, 4.5, 9].map(x => <rect key={`${x}${y}`} x={x} y={y} width="3" height="3.5" />))}</svg>
          <svg width="12" height="14" viewBox="0 0 12 14"><rect width="12" height="9" fill="#999" /><rect y="10" width="12" height="4" fill="#ccc" /></svg>
          <svg width="12" height="14" viewBox="0 0 12 14"><rect width="12" height="14" fill="#666" /></svg>
        </ViewModes>
      </StatusBar>
      <Taskbar>
        <StartButton>
          <svg width="16" height="16" viewBox="0 0 16 16" fill="#000"><path d="M0 2.200L6.800 1.200V7.500H0zM7.600 1.100L16 0V7.500H7.600zM0 8.300H6.800V14.700L0 13.800zM7.600 8.300H16V16L7.600 14.800z" /></svg>
        </StartButton>
        <TaskSearch>
          <S w={17} h={17} c="#111" sw={1.2}><circle cx="10.5" cy="6.5" r="5.5" /><path d="M6.500 10.500L1 16" /></S>
          Type here to search
          <Jelly>
            <svg width="72" height="40" viewBox="0 0 72 40">
              <defs><radialGradient id="j1"><stop offset="0" stopColor="#8f8fe0" /><stop offset=".6" stopColor="#8fb5ea" /><stop offset="1" stopColor="#5fd0e6" /></radialGradient>
                <radialGradient id="j2"><stop offset="0" stopColor="#a8e6ef" /><stop offset="1" stopColor="#35cfd0" /></radialGradient></defs>
              <ellipse cx="20" cy="17" rx="13" ry="15" fill="url(#j1)" />
              <path d="M20 6v20M12 10l16 14M28 10L12 24M8 17h24" stroke="#dff" strokeWidth=".8" />
              <path d="M12 29c0 5-4 6-8 8M18 31c0 4-2 6-3 7M24 30c3 4 7 6 12 7M28 27c4 3 6 4 9 5" stroke="#7fc9d9" fill="none" />
              <ellipse cx="50" cy="15" rx="9" ry="8" fill="url(#j2)" />
              <path d="M44 20c-1 6-3 10-5 15M50 22v14M55 20c1 6 3 9 4 14" stroke="#6cc6d3" fill="none" />
              <circle cx="66" cy="16" r="3" fill="#bfe8f0" /><circle cx="4" cy="22" r="3" fill="#bfe8f0" /><circle cx="58" cy="4" r="1.5" fill="#bfe8f0" />
            </svg>
          </Jelly>
        </TaskSearch>
        <TaskViewBtn>
          <S w={17} h={17} c="#111"><path d="M1 1h9M1 16h9M2 4.500h9v8H2zM14 1.500h2.500M14 6h2.500v2M14 11h2.500v5" strokeWidth="1.3" /></S>
        </TaskViewBtn>
        <TaskApp $running>
          <svg width="24" height="24" viewBox="0 0 24 24">
            <defs><linearGradient id="edgeA" x1="0" y1="1" x2="1" y2="0"><stop offset="0" stopColor="#0b57a4" /><stop offset=".6" stopColor="#1fa7d6" /><stop offset="1" stopColor="#55d16e" /></linearGradient></defs>
            <circle cx="12" cy="12" r="12" fill="url(#edgeA)" />
            <path d="M23.500 15c-2 1.500-8 2-9-1.500-.3-1.500 1-2.500 2.500-3C15 6 7 5 4 11c-1 5 3 11 9 12.500C17 23.500 21 20 23.500 15z" fill="#0c5ea8" />
            <path d="M17 11c0-3-3-4.500-6-4-3.500.7-5 5-3.500 9 1 2.500 3 5 6 6.500-5-.5-9-4-9.500-9 0-3 2-6 6-8 4-1.500 9 .5 7 5.500z" fill="#bfe9ff" opacity=".35" />
          </svg>
        </TaskApp>
        <TaskApp $running $multi>
          <svg width="22" height="22" viewBox="0 0 22 22"><path d="M1 4h8l2 2h10v15H1z" fill="#f5c033" /><path d="M1 3h8v3H1z" fill="#e6a419" /><path d="M1 10h20v11H1z" fill="#fbd75a" /><path d="M7 21v-7h8v7h-2.500v-4h-3v4z" fill="#1e7fc8" /></svg>
        </TaskApp>
        <TaskApp>
          <svg width="24" height="20" viewBox="0 0 24 20"><path d="M0 7L12 0l12 7v13H0z" fill="#3c4a55" /><path d="M0 7l12 6 12-6v1.500L12 13 0 8.500z" fill="#fff" /></svg>
        </TaskApp>
        <TaskApp $running $multi>
          <svg width="22" height="22" viewBox="0 0 22 22"><rect x="5" y="1" width="17" height="20" fill="#fff" stroke="#2b5797" /><path d="M13 5h7M13 8h7M13 11h7M13 14h7M13 17h7" stroke="#2b5797" /><rect x="0" y="4" width="13" height="14" fill="#2b5797" /><text x="6.5" y="14.5" fontSize="10" fontWeight="700" textAnchor="middle" fill="#fff" fontFamily="Liberation Sans">W</text></svg>
        </TaskApp>
        <TaskApp>
          <svg width="22" height="22" viewBox="0 0 22 22"><rect x="5" y="1" width="17" height="20" fill="#fff" stroke="#1d6f42" /><path d="M14 5h6M14 8h6M14 11h6M14 14h6M14 17h6M17 3v16" stroke="#1d6f42" /><rect x="0" y="4" width="13" height="14" fill="#1d6f42" /><text x="6.5" y="14.5" fontSize="10" fontWeight="700" textAnchor="middle" fill="#fff" fontFamily="Liberation Sans">X</text></svg>
        </TaskApp>
        <TaskApp>
          <svg width="22" height="22" viewBox="0 0 22 22"><rect x="5" y="1" width="17" height="20" fill="#fff" stroke="#d24726" /><circle cx="17" cy="8" r="3.5" fill="#e9967a" /><path d="M14 15h6M14 17h6" stroke="#d24726" /><rect x="0" y="4" width="13" height="14" fill="#d24726" /><text x="6.5" y="14.5" fontSize="10" fontWeight="700" textAnchor="middle" fill="#fff" fontFamily="Liberation Sans">P</text></svg>
        </TaskApp>
        <TaskApp><ChromeIcon /></TaskApp>
        <TaskApp $running><ChromeIcon badge /></TaskApp>
        <TaskApp $running>
          <svg width="22" height="22" viewBox="0 0 22 22"><rect width="22" height="22" rx="1" fill="#b30b00" /><path d="M3 17c3-1 6-6 7-12 .3-2 2-2 2 0 0 5 3 8 7 9-4 0-9 0-13 2-2 1-3 2-3 1z" fill="none" stroke="#fff" strokeWidth="1.2" /></svg>
        </TaskApp>
        <TaskApp $running>
          <svg width="22" height="24" viewBox="0 0 22 24"><path d="M16 0l6 3v18l-6 3L6 14.500 2 18l-2-1.500V7.500L2 6l4 3.500z" fill="#1f9cf0" /><path d="M16 6.500L9.500 12l6.500 5.500z" fill="#cfe5ef" /><path d="M16 0l6 3v18l-6 3z" fill="#0b7bc4" /><path d="M2 9l3 3-3 3z" fill="#cfe5ef" /></svg>
        </TaskApp>
        <TaskApp $running><ChromeIcon /></TaskApp>
        <TaskApp $running $active><LogoTile><TableauLogo size={21} c="#6d9cc4" /></LogoTile></TaskApp>
        <TraySlot $w={34} $ml={19}>
          <svg width="28" height="28" viewBox="0 0 28 28"><path d="M14 2a12 12 0 1 1-8 20c8 1 12-5 8-20z" fill="#f5a623" /><ellipse cx="10" cy="9" rx="7" ry="4.5" fill="#a9c9ec" /><ellipse cx="18" cy="21" rx="7" ry="4" fill="#a9c9ec" /></svg>
        </TraySlot>
        <TraySlot $w={34} $ml={1} $fs={13.5}>31°C</TraySlot>
        <TraySlot $w={24} $ml={8}><S w={12} h={7} c="#111" sw={1.2}><path d="M.5 6.500L6 1l5.500 5.500" /></S></TraySlot>
        <TraySlot $w={24}><S w={14} h={18} c="#111"><path d="M3 3c2-2 5-2 7 0M3 15c2 2 5 2 7 0" /><rect x="2" y="5.5" width="8" height="7" rx="1" /><path d="M10 8l3-2v6l-3-2z" /></S></TraySlot>
        <TraySlot $w={24}><S w={16} h={14} c="#111"><path d="M1 3h3M1 7h3M4 1.500h5v8H4zM9 5h4v7H6" /><rect x="4" y="2" width="5" height="7" fill="#111" /></S></TraySlot>
        <TraySlot $w={25}><S w={16} h={14} c="#111" sw={1.2}><path d="M1 13C1 6 7 1 15 1M5 13c0-5 4-8 10-8M9 13c0-3 2-4 6-4" /></S></TraySlot>
        <TraySlot $w={23}><S w={16} h={14} c="#111"><path d="M1 5h3l4-4v12l-4-4H1zM10.500 5l4 4M14.500 5l-4 4" /></S></TraySlot>
        <TraySlot $w={24} $ml={5}><S w={16} h={18} c="#111" sw={1.3}><path d="M3 16L11 4c2-2.500 4-.5 3 1.500L7 15c-1 2-4 1-2.500-1.500L10 6" /><path d="M1 10c1-1 3-1 3 1M12 12c1 0 3 0 3-1" /></S></TraySlot>
        <TraySlot $w={32} $ml={6}>ENG</TraySlot>
        <TraySlot $w={64} $ml={3}><ClockText>08:03<br />24-04-2023</ClockText></TraySlot>
        <TraySlot $w={28} $ml={10}><S w={16} h={16} c="#111" sw={1.2}><path d="M.5 1h15v11h-4.500l-3 3-1-3H.5z" /></S></TraySlot>
      </Taskbar>
    </Root>
  );
}
